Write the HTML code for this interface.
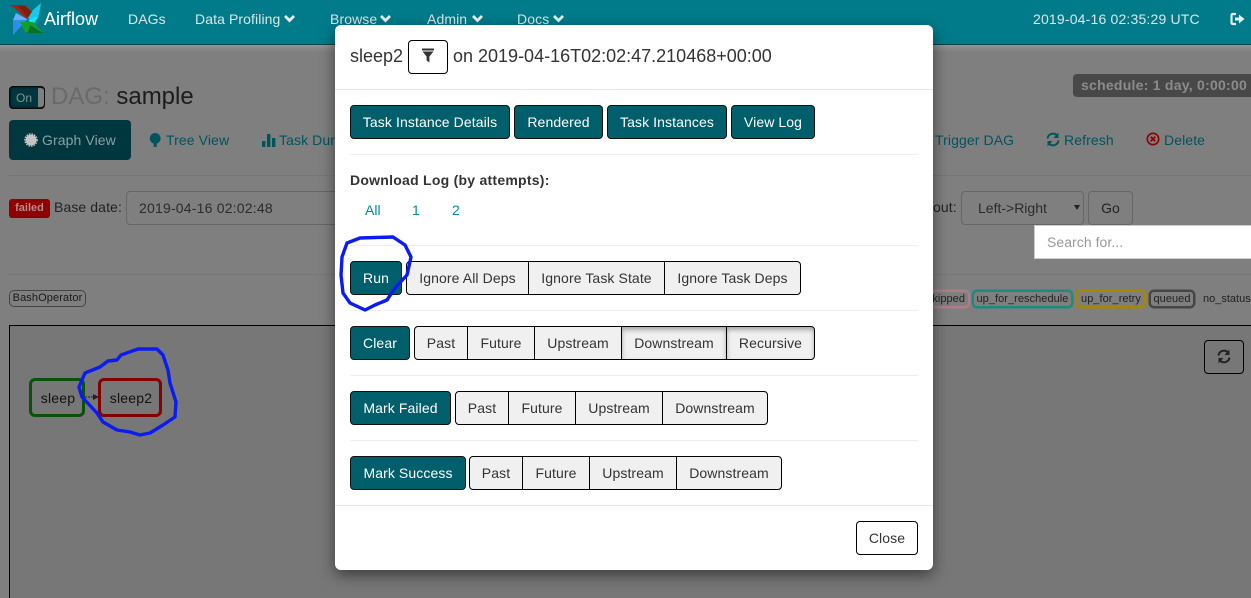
<!DOCTYPE html>
<html><head><meta charset="utf-8"><style>
html,body{margin:0;padding:0;width:1251px;height:598px;overflow:hidden;background:#7f7f7f;font-family:"Liberation Sans",sans-serif;font-size:14px;color:#1a1a1a}
.a{position:absolute;white-space:nowrap}
.nl{top:11px;color:#dbe6e8;font-size:14px;line-height:16px;letter-spacing:.1px}
.tab{top:132px;color:#00545e;line-height:16px;letter-spacing:.1px}
.b{position:absolute;box-sizing:border-box;height:34px;line-height:32px;text-align:center;border:1px solid #000;white-space:nowrap;font-size:14px;letter-spacing:.1px}
.p{background:#015f6b;color:#fff;border-radius:4px;border-color:#111}
.g{background:#f0f0f0;color:#333}
.l{border-radius:4px 0 0 4px}
.r{border-radius:0 4px 4px 0}
.m{margin-left:-1px}
.act{box-shadow:inset 0 3px 5px rgba(0,0,0,.3)}
.hr{position:absolute;left:15px;width:568px;height:1px;background:#eee}
.lg{position:absolute;top:290px;box-sizing:border-box;height:18px;line-height:14px;font-size:11px;border-radius:5px;border:2px solid;color:#222;text-align:center;white-space:nowrap;letter-spacing:.05px}
</style></head><body>
<div class="a" style="left:0;top:0;width:1251px;height:45px;background:#017b8a;border-bottom:1px solid #00424b;box-sizing:border-box"></div>
<div class="a" style="left:0;top:45px;width:1251px;height:7px;background:linear-gradient(#939393,#7f7f7f)"></div>
<svg class="a" style="left:10px;top:3px" width="34" height="34" viewBox="10 3 34 34">
<polygon points="10,5 25,5 33,13 27,19 17,10" fill="#a8200f"/><polygon points="18,6 25,6 33,13 28,18" fill="#7d1e10"/>
<polygon points="16,13 27,19 26,21 13,20" fill="#69aefc"/>
<polygon points="13,20 27,20 13,35" fill="#2d8de8"/>
<polygon points="41,3 39,15 33,21 28,18 33,10" fill="#19c8e8"/>
<polygon points="28,20 39,16 33,25" fill="#11e6ff"/>
<polygon points="20,22 33,22 43,33 25,32" fill="#10a02e"/>
<polygon points="30,25 43,33 28,33" fill="#0c6e24"/></svg>
<div class="a" style="left:44px;top:8px;font-size:18px;line-height:22px;color:#fff">Airflow</div>
<div class="a nl" style="left:128px">DAGs</div>
<div class="a nl" style="left:195px">Data Profiling</div>
<div class="a nl" style="left:330px">Browse</div>
<div class="a nl" style="left:427px">Admin</div>
<div class="a nl" style="left:517px">Docs</div>
<svg class="a" style="left:283px;top:14px" width="13" height="9"><path d="M2 2L6.5 6.5L11 2" fill="none" stroke="#e8eff0" stroke-width="2.8"/></svg>
<svg class="a" style="left:379px;top:14px" width="13" height="9"><path d="M2 2L6.5 6.5L11 2" fill="none" stroke="#e8eff0" stroke-width="2.8"/></svg>
<svg class="a" style="left:471px;top:14px" width="13" height="9"><path d="M2 2L6.5 6.5L11 2" fill="none" stroke="#e8eff0" stroke-width="2.8"/></svg>
<svg class="a" style="left:552px;top:14px" width="13" height="9"><path d="M2 2L6.5 6.5L11 2" fill="none" stroke="#e8eff0" stroke-width="2.8"/></svg>
<div class="a nl" style="left:1033px;letter-spacing:.18px">2019-04-16 02:35:29 UTC</div>
<svg class="a" style="left:1230px;top:12px" width="16" height="14"><path d="M6 2H3Q1.5 2 1.5 3.5V10.5Q1.5 12 3 12H6" fill="none" stroke="#e8eff0" stroke-width="2.2"/><path d="M5 5.5H9V2.5L14.5 7L9 11.5V8.5H5Z" fill="#e8eff0"/></svg>

<div class="a" style="left:9px;top:86px;width:36px;height:23px;box-sizing:border-box;border:1px solid #0a0a0a;border-radius:4px;background:#00363e;box-shadow:inset 0 0 2px #000"></div>
<div class="a" style="left:38px;top:88px;width:6px;height:19px;background:#7f7f7f;border-radius:0 3px 3px 0"></div>
<div class="a" style="left:16px;top:90px;font-size:12px;line-height:16px;color:#7f9599">On</div>
<div class="a" style="left:51px;top:83px;font-size:24px;line-height:28px;color:#6a6a6a">DAG: <span style="color:#1c1c1c">sample</span></div>
<div class="a" style="left:1073px;top:74px;width:178px;height:23px;background:#484848;border-radius:4px 0 0 4px;color:#8c8c8c;font-weight:bold;font-size:14px;letter-spacing:.25px;line-height:23px;padding-left:8px;box-sizing:border-box">schedule: 1 day, 0:00:00</div>

<div class="a" style="left:9px;top:120px;width:122px;height:40px;background:#00363e;border-radius:4px"></div>
<svg class="a" style="left:24px;top:133px" width="14" height="14" viewBox="0 0 14 14"><circle cx="7" cy="7" r="5.4" fill="#c4c4c4"/><circle cx="7" cy="7" r="6" fill="none" stroke="#c4c4c4" stroke-width="1.6" stroke-dasharray="1.5 1.1"/></svg>
<div class="a" style="left:42px;top:132px;line-height:16px;color:#8aa0a4;letter-spacing:.1px">Graph View</div>
<svg class="a" style="left:149px;top:133px" width="13" height="14" viewBox="0 0 13 14"><circle cx="6.2" cy="5.4" r="5.4" fill="#00545e"/><rect x="4.7" y="8" width="3" height="6" fill="#00545e"/></svg>
<div class="a tab" style="left:166px">Tree View</div>
<svg class="a" style="left:262px;top:133px" width="14" height="14" viewBox="0 0 14 14"><rect x="0" y="8" width="3.4" height="6" fill="#00545e"/><rect x="5" y="1" width="3.4" height="13" fill="#00545e"/><rect x="10" y="5" width="3.4" height="9" fill="#00545e"/></svg>
<div class="a tab" style="left:279px">Task Dur</div>
<div class="a tab" style="left:935px">Trigger DAG</div>
<svg class="a" style="left:1046px;top:132px" width="14" height="15" viewBox="0 0 14 15" fill="none"><path d="M1.5 6.5A5.5 5.5 0 0 1 11 3.5" stroke="#00545e" stroke-width="2"/><path d="M12.5 0.5V6H7.5Z" fill="#00545e"/><path d="M12.5 8.5A5.5 5.5 0 0 1 3 11.5" stroke="#00545e" stroke-width="2"/><path d="M1.5 14.5V9H6.5Z" fill="#00545e"/></svg>
<div class="a tab" style="left:1064px">Refresh</div>
<svg class="a" style="left:1146px;top:132px" width="14" height="14" viewBox="0 0 14 14" fill="none"><circle cx="7" cy="7" r="5.7" stroke="#8f0000" stroke-width="1.6"/><path d="M4.7 4.7L9.3 9.3M9.3 4.7L4.7 9.3" stroke="#8f0000" stroke-width="1.8"/></svg>
<div class="a tab" style="left:1164px">Delete</div>
<div class="a" style="left:9px;top:175px;width:1242px;height:1px;background:#767676"></div>

<div class="a" style="left:9px;top:199px;width:41px;height:19px;background:#900000;border-radius:3px;color:#b08f8f;font-weight:bold;font-size:11px;line-height:18px;text-align:center">failed</div>
<div class="a" style="left:54px;top:199px;line-height:16px;color:#222;letter-spacing:.1px">Base date:</div>
<div class="a" style="left:126px;top:191px;width:300px;height:34px;box-sizing:border-box;border:1px solid #666;border-radius:4px;color:#2b2b2b;line-height:32px;padding-left:12px;letter-spacing:.2px">2019-04-16 02:02:48</div>
<div class="a" style="left:933px;top:199px;line-height:16px;color:#222;letter-spacing:.1px">out:</div>
<div class="a" style="left:961px;top:191px;width:123px;height:34px;box-sizing:border-box;border:1px solid #666;border-radius:4px;color:#2b2b2b;line-height:32px;padding-left:16px">Left-&gt;Right</div>
<div class="a" style="left:1074px;top:205px;width:0;height:0;border:3.5px solid transparent;border-top:5px solid #222;border-bottom:0"></div>
<div class="a" style="left:1088px;top:191px;width:45px;height:34px;box-sizing:border-box;border:1px solid #666;border-radius:4px;color:#222;line-height:32px;text-align:center">Go</div>
<div class="a" style="left:1034px;top:225px;width:217px;height:34px;box-sizing:border-box;background:#fff;border:1px solid #ccc;border-right:0;color:#999;line-height:32px;padding-left:12px;letter-spacing:.05px">Search for...</div>
<div class="a" style="left:9px;top:274px;width:1242px;height:1px;background:#767676"></div>

<div class="a" style="left:9px;top:290px;width:77px;height:17px;box-sizing:border-box;border:1px solid #444;border-radius:5px;font-size:11px;line-height:15px;text-align:center;color:#1a1a1a;letter-spacing:.1px">BashOperator</div>
<div class="lg" style="left:925px;width:45px;border-color:#ac7f86;text-align:right;padding-right:3px;box-shadow:0 0 0 .5px #ac7f86">kipped</div>
<div class="lg" style="left:972px;width:101px;border-color:#1c8a7e;box-shadow:0 0 0 .5px #1c8a7e">up_for_reschedule</div>
<div class="lg" style="left:1076px;width:70px;border-color:#a38800;box-shadow:0 0 0 .5px #a38800">up_for_retry</div>
<div class="lg" style="left:1149px;width:46px;border-color:#454545;box-shadow:0 0 0 .5px #454545">queued</div>
<div class="a" style="left:1203px;top:292px;font-size:11px;line-height:14px;color:#222">no_status</div>

<div class="a" style="left:9px;top:325px;width:1242px;height:273px;box-sizing:border-box;border:1px solid #000;border-width:1px 0 0 1px;background:#777"></div>
<div class="a" style="left:1204px;top:340px;width:40px;height:34px;box-sizing:border-box;border:1px solid #000;border-radius:4px"></div>
<svg class="a" style="left:1217px;top:349px" width="14" height="15" viewBox="0 0 14 15" fill="none"><path d="M1.5 6.5A5.5 5.5 0 0 1 11 3.5" stroke="#222" stroke-width="2"/><path d="M12.5 0.5V6H7.5Z" fill="#222"/><path d="M12.5 8.5A5.5 5.5 0 0 1 3 11.5" stroke="#222" stroke-width="2"/><path d="M1.5 14.5V9H6.5Z" fill="#222"/></svg>
<div class="a" style="left:29px;top:378px;width:56px;height:39px;box-sizing:border-box;border:3px solid #0a520a;border-radius:6px;line-height:34px;text-align:center;color:#111;letter-spacing:.2px;padding-left:2px">sleep</div>
<div class="a" style="left:98px;top:378px;width:64px;height:39px;box-sizing:border-box;border:3px solid #850000;border-radius:6px;line-height:34px;text-align:center;color:#111;letter-spacing:.2px;padding-left:2px">sleep2</div>
<svg class="a" style="left:0;top:320px" width="340" height="130" viewBox="0 320 340 130"><path d="M85 397H94" stroke="#333" stroke-width="1.3" stroke-dasharray="2 1"/><path d="M93 394L99 397L93 400Z" fill="#222"/>
<path d="M138 349L157 349L163 355L168 370L170 383L176 402L175 417L163 425L150 433L140 435L130 432L117 430L103 422L97 413L82 397L79 387L85 373L100 367L108 361L117 360L121 355Z" fill="none" stroke="#0b1cf0" stroke-width="3.4" stroke-linejoin="round"/></svg>

<div class="a" style="left:335px;top:25px;width:598px;height:545px;background:#fff;border-radius:6px;box-shadow:0 5px 15px rgba(0,0,0,.5);color:#333">
<div class="a" style="left:15px;top:21px;font-size:18px;line-height:20px">sleep2</div>
<div class="b" style="left:73px;top:15px;width:40px;background:#fff;border-radius:4px"></div>
<svg class="a" style="left:87px;top:23px" width="12" height="15" viewBox="0 0 12 15"><path d="M0 0.5H12V2.5H0ZM0.5 3.5H11.5L7.4 8.5V14.5L4.6 12.5V8.5Z" fill="#333"/></svg>
<div class="a" style="left:118px;top:21px;font-size:18px;line-height:20px">on 2019-04-16T02:02:47.210468+00:00</div>
<div class="a" style="left:0;top:64px;width:598px;height:1px;background:#e5e5e5"></div>

<div class="b p" style="left:15px;top:80px;width:160px">Task Instance Details</div>
<div class="b p" style="left:179px;top:80px;width:89px">Rendered</div>
<div class="b p" style="left:272px;top:80px;width:120px">Task Instances</div>
<div class="b p" style="left:396px;top:80px;width:84px">View Log</div>
<div class="hr" style="top:129px"></div>

<div class="a" style="left:15px;top:147px;font-weight:bold;line-height:16px;font-size:14px;letter-spacing:.25px">Download Log (by attempts):</div>
<div class="a" style="left:30px;top:177px;line-height:16px;color:#008c9c">All</div>
<div class="a" style="left:77px;top:177px;line-height:16px;color:#008c9c">1</div>
<div class="a" style="left:117px;top:177px;line-height:16px;color:#008c9c">2</div>
<div class="hr" style="top:220px"></div>

<div class="b p" style="left:15px;top:236px;width:52px">Run</div>
<div class="b g l" style="left:71px;top:236px;width:123px">Ignore All Deps</div>
<div class="b g m" style="left:194px;top:236px;width:137px">Ignore Task State</div>
<div class="b g r m" style="left:330px;top:236px;width:137px">Ignore Task Deps</div>
<div class="hr" style="top:285px"></div>

<div class="b p" style="left:15px;top:301px;width:60px">Clear</div>
<div class="b g l" style="left:79px;top:301px;width:54px">Past</div>
<div class="b g m" style="left:133px;top:301px;width:68px">Future</div>
<div class="b g m" style="left:200px;top:301px;width:88px">Upstream</div>
<div class="b g m act" style="left:287px;top:301px;width:106px">Downstream</div>
<div class="b g r m act" style="left:392px;top:301px;width:89px">Recursive</div>
<div class="hr" style="top:350px"></div>

<div class="b p" style="left:15px;top:366px;width:101px">Mark Failed</div>
<div class="b g l" style="left:120px;top:366px;width:54px">Past</div>
<div class="b g m" style="left:174px;top:366px;width:68px">Future</div>
<div class="b g m" style="left:241px;top:366px;width:88px">Upstream</div>
<div class="b g r m" style="left:328px;top:366px;width:106px">Downstream</div>
<div class="hr" style="top:415px"></div>

<div class="b p" style="left:15px;top:431px;width:116px">Mark Success</div>
<div class="b g l" style="left:134px;top:431px;width:54px">Past</div>
<div class="b g m" style="left:188px;top:431px;width:68px">Future</div>
<div class="b g m" style="left:255px;top:431px;width:88px">Upstream</div>
<div class="b g r m" style="left:342px;top:431px;width:106px">Downstream</div>

<div class="a" style="left:0;top:480px;width:598px;height:1px;background:#e5e5e5"></div>
<div class="b" style="left:521px;top:496px;width:62px;background:#fff;border-radius:4px;color:#333">Close</div>
</div>
<svg class="a" style="left:335px;top:230px" width="85" height="85" viewBox="335 230 85 85"><path d="M365 310L350 303L343 293L341 275L342 257L347 243L360 238L393 237L405 245L411 257L407 275L395 288L387 300L375 305Z" fill="none" stroke="#0b1cf0" stroke-width="3.4" stroke-linejoin="round"/></svg>
</body></html>
